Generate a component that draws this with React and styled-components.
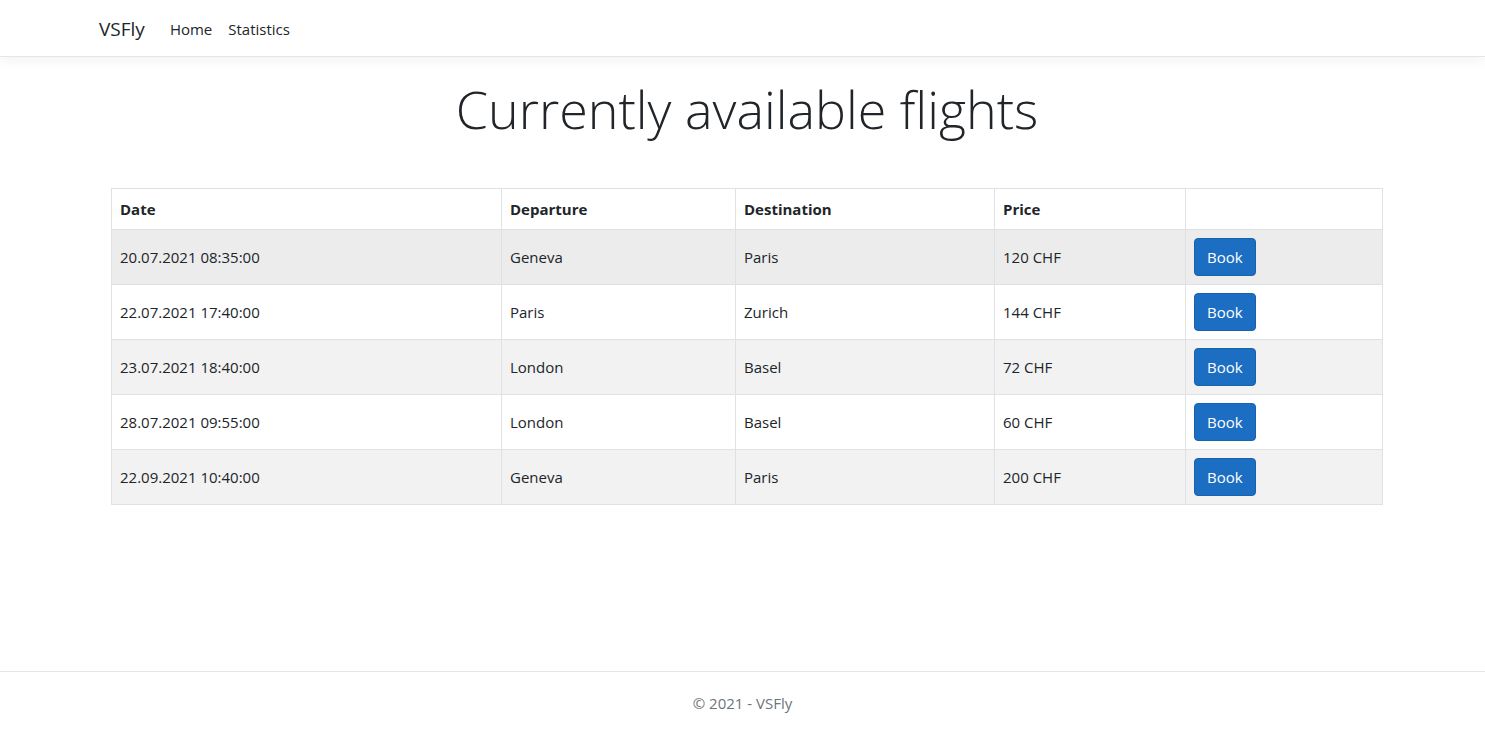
import React from 'react';
import styled, { createGlobalStyle } from 'styled-components';

const GlobalStyle = createGlobalStyle`
  *, *::before, *::after {
    box-sizing: border-box;
  }
  html, body {
    margin: 0;
    padding: 0;
  }
  body {
    font-family: "Open Sans", "Noto Sans", sans-serif;
    font-size: 15px;
    color: #212529;
    background: #fff;
  }
`;

const Page = styled.div`
  min-height: 100vh;
  display: flex;
  flex-direction: column;
`;

const Navbar = styled.nav`
  height: 57px;
  display: flex;
  align-items: center;
  padding: 2px 99px 0;
  border-bottom: 1px solid #e5e5e5;
  box-shadow: 0 4px 12px rgba(0, 0, 0, 0.05);
`;

const Brand = styled.a`
  font-size: 19px;
  color: #212529;
  text-decoration: none;
  margin-right: 17px;
`;

const NavLink = styled.a`
  font-size: 15px;
  color: #212529;
  text-decoration: none;
  padding: 0 8px;
`;

const Main = styled.main`
  padding: 0 102px 0 111px;
`;

const Title = styled.h1`
  margin: 21px 0 48px;
  text-align: center;
  font-size: 52px;
  font-weight: 300;
  line-height: 1.2;
`;

const Table = styled.table`
  width: 100%;
  border-collapse: collapse;
  table-layout: fixed;
`;

const Th = styled.th`
  text-align: left;
  font-weight: 700;
  padding: 8px;
  line-height: 24px;
  border: 1px solid #dee2e6;
  width: ${(p) => p.w || 'auto'};
`;

const Tr = styled.tr`
  background: ${(p) => (p.hover ? '#ececec' : p.striped ? '#f2f2f2' : '#fff')};
`;

const Td = styled.td`
  padding: 8px;
  line-height: 24px;
  border: 1px solid #dee2e6;
`;

const BookButton = styled.button`
  font-family: inherit;
  font-size: 15px;
  line-height: 24px;
  padding: 6px 12px;
  color: #fff;
  background: #1b6ec2;
  border: 1px solid #1861ac;
  border-radius: 4px;
  cursor: pointer;
`;

const Footer = styled.footer`
  margin-top: auto;
  border-top: 1px solid #e5e5e5;
  padding-top: 3px;
  line-height: 56px;
  text-align: center;
  color: #6c757d;
  font-size: 15px;
`;

const flights = [
  { date: '20.07.2021 08:35:00', from: 'Geneva', to: 'Paris', price: '120 CHF' },
  { date: '22.07.2021 17:40:00', from: 'Paris', to: 'Zurich', price: '144 CHF' },
  { date: '23.07.2021 18:40:00', from: 'London', to: 'Basel', price: '72 CHF' },
  { date: '28.07.2021 09:55:00', from: 'London', to: 'Basel', price: '60 CHF' },
  { date: '22.09.2021 10:40:00', from: 'Geneva', to: 'Paris', price: '200 CHF' },
];

export default function App() {
  return (
    <Page>
      <GlobalStyle />
      <Navbar>
        <Brand href="#">VSFly</Brand>
        <NavLink href="#">Home</NavLink>
        <NavLink href="#">Statistics</NavLink>
      </Navbar>
      <Main>
        <Title>Currently available flights</Title>
        <Table>
          <thead>
            <tr>
              <Th w="390px">Date</Th>
              <Th w="234px">Departure</Th>
              <Th w="259px">Destination</Th>
              <Th w="191px">Price</Th>
              <Th />
            </tr>
          </thead>
          <tbody>
            {flights.map((f, i) => (
              <Tr key={f.date} hover={i === 0} striped={i % 2 === 0}>
                <Td>{f.date}</Td>
                <Td>{f.from}</Td>
                <Td>{f.to}</Td>
                <Td>{f.price}</Td>
                <Td>
                  <BookButton>Book</BookButton>
                </Td>
              </Tr>
            ))}
          </tbody>
        </Table>
      </Main>
      <Footer>© 2021 - VSFly</Footer>
    </Page>
  );
}
